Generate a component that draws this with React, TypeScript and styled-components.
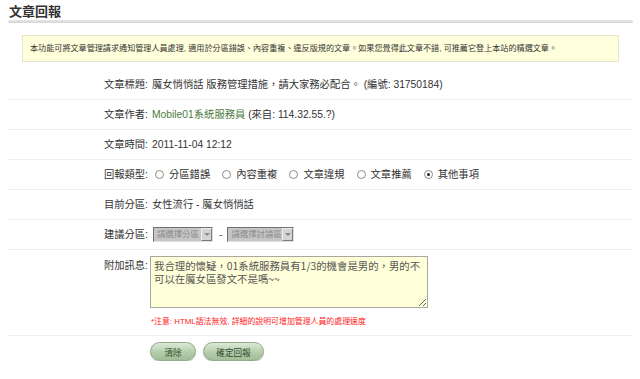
import styled, { createGlobalStyle } from "styled-components";

const GlobalStyle = createGlobalStyle`
  body {
    margin: 0;
    background: #fff;
    font-family: "Liberation Sans", "Noto Sans CJK TC", sans-serif;
    color: #333;
  }
`;

const Page = styled.div`
  width: 625px;
  padding: 0 7px 0 8px;
`;

const Title = styled.h1`
  margin: 0;
  padding: 4px 0 0 1px;
  height: 16px;
  font-size: 13px;
  line-height: 15px;
  font-weight: bold;
  color: #333;
`;

const Rule = styled.div`
  height: 3px;
  border-radius: 2px;
  background: linear-gradient(#e6e6e6, #d6d6d6);
`;

const Notice = styled.div`
  margin: 12px 14px 0;
  height: 25px;
  padding-left: 7px;
  border: 1px solid #e6e6cc;
  background: #ffffdc;
  font-size: 8.1px;
  line-height: 25px;
  color: #333;
  white-space: nowrap;
`;

const Form = styled.div`
  margin-top: 8px;
`;

const Row = styled.div<{ $tall?: boolean }>`
  display: flex;
  align-items: ${(p) => (p.$tall ? "flex-start" : "center")};
  height: ${(p) => (p.$tall ? "auto" : "29px")};
  padding: ${(p) => (p.$tall ? "6px 0 7px" : "0")};
  border-bottom: 1px solid #eeeeee;
  font-size: 10.3px;
`;

const Label = styled.div<{ $top?: boolean }>`
  width: 140px;
  padding-right: 4px;
  padding-top: ${(p) => (p.$top ? "3px" : "0")};
  text-align: right;
  line-height: 13px;
  color: #333;
  white-space: nowrap;
`;

const Value = styled.div`
  flex: 1;
  line-height: 13px;
  white-space: nowrap;
  color: #333;
`;

const Author = styled.span`
  color: #4b7a3c;
`;

const Radios = styled.div`
  display: flex;
  align-items: center;
`;

const Option = styled.label`
  display: flex;
  align-items: center;
  margin-right: 9px;
`;

const Radio = styled.span<{ $on?: boolean }>`
  position: relative;
  width: 7px;
  height: 7px;
  margin: 0 5px 0 3px;
  border: 1px solid #8a8a8a;
  border-radius: 50%;
  background: #fff;
  box-sizing: content-box;

  &::after {
    content: "";
    display: ${(p) => (p.$on ? "block" : "none")};
    position: absolute;
    left: 2px;
    top: 2px;
    width: 3px;
    height: 3px;
    border-radius: 50%;
    background: #222;
  }
`;

const Selects = styled.div`
  display: flex;
  align-items: center;
  padding-left: 1px;
`;

const FakeSelect = styled.span<{ $w: number }>`
  display: inline-flex;
  align-items: center;
  justify-content: space-between;
  width: ${(p) => p.$w}px;
  height: 15px;
  box-sizing: border-box;
  border: 1px solid;
  border-color: #6f6f6f #e0e0e0 #e0e0e0 #6f6f6f;
  background: #c6c6c6;
  color: #8c8c8c;
  font-size: 8.4px;
  padding-left: 3px;
  overflow: hidden;
`;

const Arrow = styled.span`
  display: flex;
  flex: none;
  align-items: center;
  justify-content: center;
  width: 11px;
  height: 13px;
  box-sizing: border-box;
  border: 1px solid;
  border-color: #f0f0f0 #7a7a7a #7a7a7a #f0f0f0;
  background: #d4d4d4;

  &::after {
    content: "";
    border-left: 3px solid transparent;
    border-right: 3px solid transparent;
    border-top: 3px solid #8a8a8a;
  }
`;

const Dash = styled.span`
  margin: 0 5px 0 6px;
  color: #555;
`;

const Message = styled.textarea`
  display: block;
  width: 278px;
  height: 52px;
  box-sizing: border-box;
  margin: 0 0 0 -2px;
  padding: 2px 3px;
  border: 1px solid #a8a8a0;
  background: #ffffd9;
  font-family: "Noto Sans CJK TC", "Liberation Sans", sans-serif;
  font-size: 10.4px;
  line-height: 13px;
  color: #555;
  resize: both;
  outline: none;
`;

const Note = styled.div`
  margin: 8px 0 0 -1px;
  font-size: 7.9px;
  line-height: 12px;
  color: #ff1a1a;
`;

const Buttons = styled.div`
  display: flex;
  gap: 7px;
  margin-top: 6px;
  padding-left: 142px;
`;

const Pill = styled.button<{ $w: number }>`
  width: ${(p) => p.$w}px;
  height: 19px;
  padding: 0;
  border: 1px solid #8fab88;
  border-radius: 10px;
  background: linear-gradient(#dbe9d5, #b4cdac 55%, #9fbd97);
  box-shadow: 0 1px 1px rgba(0, 0, 0, 0.15);
  font-family: "Noto Sans CJK TC", "Liberation Sans", sans-serif;
  font-size: 8.6px;
  color: #2e4a2c;
  cursor: pointer;
`;

const types = ["分區錯誤", "內容重複", "文章違規", "文章推薦", "其他事項"];

export default function App() {
  return (
    <Page>
      <GlobalStyle />
      <Title>文章回報</Title>
      <Rule />
      <Notice>
        本功能可將文章管理請求通知管理人員處理, 適用於分區錯誤、內容重複、違反版規的文章。如果您覺得此文章不錯, 可推薦它登上本站的精選文章。
      </Notice>
      <Form>
        <Row>
          <Label>文章標題:</Label>
          <Value>魔女悄悄話 版務管理措施，請大家務必配合。 (編號: 31750184)</Value>
        </Row>
        <Row>
          <Label>文章作者:</Label>
          <Value>
            <Author>Mobile01系統服務員</Author> (來自: 114.32.55.?)
          </Value>
        </Row>
        <Row>
          <Label>文章時間:</Label>
          <Value>2011-11-04 12:12</Value>
        </Row>
        <Row>
          <Label>回報類型:</Label>
          <Value>
            <Radios>
              {types.map((t, i) => (
                <Option key={t}>
                  <Radio $on={i === types.length - 1} />
                  {t}
                </Option>
              ))}
            </Radios>
          </Value>
        </Row>
        <Row>
          <Label>目前分區:</Label>
          <Value>女性流行 - 魔女悄悄話</Value>
        </Row>
        <Row>
          <Label>建議分區:</Label>
          <Value>
            <Selects>
              <FakeSelect $w={60}>
                請選擇分區
                <Arrow />
              </FakeSelect>
              <Dash>-</Dash>
              <FakeSelect $w={67}>
                請選擇討論區
                <Arrow />
              </FakeSelect>
            </Selects>
          </Value>
        </Row>
        <Row $tall>
          <Label $top>附加訊息:</Label>
          <Value>
            <Message defaultValue="我合理的懷疑，01系統服務員有1/3的機會是男的，男的不可以在魔女區發文不是嗎~~" />
            <Note>*注意: HTML語法無效, 詳細的說明可增加管理人員的處理速度</Note>
          </Value>
        </Row>
      </Form>
      <Buttons>
        <Pill $w={46}>清除</Pill>
        <Pill $w={61}>確定回報</Pill>
      </Buttons>
    </Page>
  );
}
